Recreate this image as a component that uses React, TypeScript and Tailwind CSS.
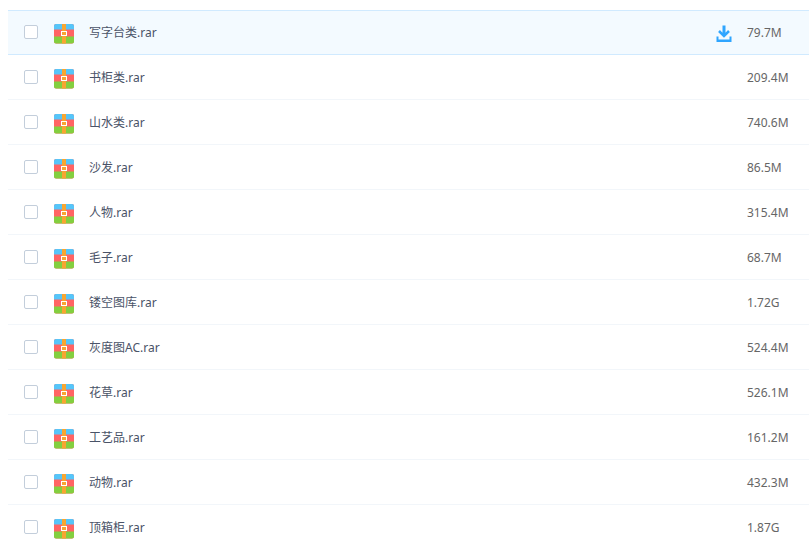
const files = [
  { name: "写字台类.rar", size: "79.7M" },
  { name: "书柜类.rar", size: "209.4M" },
  { name: "山水类.rar", size: "740.6M" },
  { name: "沙发.rar", size: "86.5M" },
  { name: "人物.rar", size: "315.4M" },
  { name: "毛子.rar", size: "68.7M" },
  { name: "镂空图库.rar", size: "1.72G" },
  { name: "灰度图AC.rar", size: "524.4M" },
  { name: "花草.rar", size: "526.1M" },
  { name: "工艺品.rar", size: "161.2M" },
  { name: "动物.rar", size: "432.3M" },
  { name: "顶箱柜.rar", size: "1.87G" },
];

function RarIcon() {
  return (
    <svg width="20" height="20" viewBox="0 0 20 20" className="block">
      <rect x="0" y="0" width="20" height="19.5" rx="2" fill="#ff6464" />
      <path d="M2 0h16a2 2 0 0 1 2 2v3.5H0V2a2 2 0 0 1 2-2z" fill="#56c5f9" />
      <path d="M0 12.5h20v5a2 2 0 0 1-2 2H2a2 2 0 0 1-2-2z" fill="#83cf3f" />
      <rect x="8" y="0" width="4" height="19.5" fill="#f8a531" />
      <rect x="7.5" y="7.5" width="5" height="4" fill="#f8a531" stroke="#fff" strokeWidth="1" />
    </svg>
  );
}

function DownloadIcon() {
  return (
    <svg width="16" height="18" viewBox="0 0 16 18" className="block" fill="#2fa5ff">
      <path d="M6.5 0.5h3v7.2l2.6-2.6 1.8 1.8L8 12.8 2.1 6.9l1.8-1.8 2.6 2.6z" />
      <path d="M0.5 11.5h2v3h11v-3h2v5.5h-15z" />
    </svg>
  );
}

export default function App() {
  return (
    <main className="w-[809px] h-[549px] overflow-hidden bg-white pt-[10px] pl-2 font-['Noto_Sans','Noto_Sans_CJK_SC',sans-serif] text-xs">
      {files.map((f, i) => (
        <div
          key={f.name}
          className={
            i === 0
              ? "flex items-center h-[45px] pb-px border-y border-[#d0eaff] bg-[#f3faff]"
              : "flex items-center h-[45px] border-b border-[#f2f6fa]"
          }
        >
          <span className="w-[14px] h-[14px] ml-4 shrink-0 rounded-[2px] border border-[#c3cedb] bg-white" />
          <span className="ml-4 mt-[4px] shrink-0">
            <RarIcon />
          </span>
          <span className="ml-[15px] mt-[2px] text-[#4a5368]">{f.name}</span>
          <span className="ml-auto mr-[15px] mt-[3px]">{i === 0 && <DownloadIcon />}</span>
          <span className="w-[47px] mr-[15px] mt-[2px] shrink-0 text-[#666666]">{f.size}</span>
        </div>
      ))}
    </main>
  );
}
